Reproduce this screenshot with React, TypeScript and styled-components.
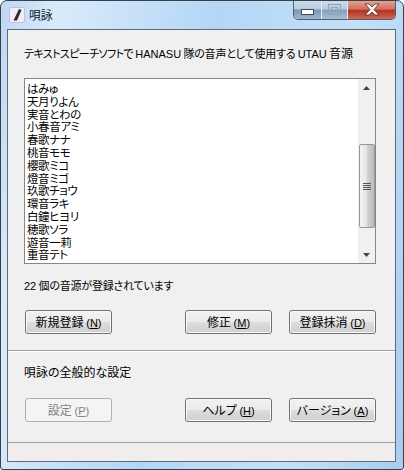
import * as React from "react";
import styled, { createGlobalStyle } from "styled-components";

const names = [
  "はみゅ",
  "天月りよん",
  "実音とわの",
  "小春音アミ",
  "春歌ナナ",
  "桃音モモ",
  "櫻歌ミコ",
  "燈音ミゴ",
  "玖歌チョウ",
  "環音ラキ",
  "白鐘ヒヨリ",
  "穂歌ソラ",
  "遊音一莉",
  "重音テト",
];

const App = () => {
  return (
    <>
      <GlobalStyle />
      <Frame>
        <TitleBar>
          <AppIcon>
            <svg width="16" height="16" viewBox="0 0 16 16">
              <rect x="0.5" y="0.5" width="15" height="15" rx="1.5" fill="#f1ebfa" stroke="#c9b9e4" />
              <path d="M10 2 L12.5 3 L8 13.5 L4.5 13.5 Z" fill="#2b2b2b" />
            </svg>
          </AppIcon>
          <TitleText>唄詠</TitleText>
          <Caption>
            <MinButton>
              <svg width="13" height="6" viewBox="0 0 13 6">
                <rect x="0.5" y="0.5" width="12" height="5" fill="#fff" stroke="#3c4f66" />
              </svg>
            </MinButton>
            <MaxButton>
              <svg width="13" height="11" viewBox="0 0 13 11">
                <rect x="0.5" y="0.5" width="12" height="10" fill="none" stroke="#8fa3b8" />
                <rect x="3.5" y="3.5" width="6" height="4" fill="none" stroke="#8fa3b8" />
              </svg>
            </MaxButton>
            <CloseButton>
              <svg width="16" height="13" viewBox="0 0 16 13">
                <path
                  d="M1 1 H5 L8 4 L11 1 H15 L10 6.5 L15 12 H11 L8 9 L5 12 H1 L6 6.5 Z"
                  fill="#f4f4f4"
                  stroke="#4a2a2a"
                  strokeWidth="0.8"
                />
              </svg>
            </CloseButton>
          </Caption>
        </TitleBar>
        <Client>
          <MainPanel>
            <Label>
              <TightRun>テキストスピーチソフトで</TightRun> <Latin>HANASU</Latin> 隊の音声として使用する{" "}
              <Latin>UTAU</Latin> <WideRun>音源</WideRun>
            </Label>
            <ListBox>
              <Items>
                {names.map((name) => (
                  <Item key={name}>{name}</Item>
                ))}
              </Items>
              <ScrollBar>
                <Arrow>
                  <svg width="7" height="4" viewBox="0 0 7 4">
                    <path d="M3.5 0 L7 4 H0 Z" fill="#444" />
                  </svg>
                </Arrow>
                <Track>
                  <Thumb>
                    <Grip />
                    <Grip />
                    <Grip />
                    <Grip />
                  </Thumb>
                </Track>
                <Arrow>
                  <svg width="7" height="4" viewBox="0 0 7 4">
                    <path d="M0 0 H7 L3.5 4 Z" fill="#444" />
                  </svg>
                </Arrow>
              </ScrollBar>
            </ListBox>
            <Count>
              <Latin>22</Latin> 個の音源が登録されています
            </Count>
            <ButtonRow>
              <Button>
                新規登録 <Latin>(<u>N</u>)</Latin>
              </Button>
              <RightButtons>
                <Button>
                  修正 <Latin>(<u>M</u>)</Latin>
                </Button>
                <Button>
                  登録抹消 <Latin>(<u>D</u>)</Latin>
                </Button>
              </RightButtons>
            </ButtonRow>
          </MainPanel>
          <GlobalPanel>
            <Label>
              <WideRun>唄詠の全般的な設定</WideRun>
            </Label>
            <GlobalRow>
              <Button disabled>
                設定 <Latin>(<u>P</u>)</Latin>
              </Button>
              <RightButtons>
                <Button>
                  ヘルプ <Latin>(<u>H</u>)</Latin>
                </Button>
                <Button>
                  バージョン <Latin>(<u>A</u>)</Latin>
                </Button>
              </RightButtons>
            </GlobalRow>
          </GlobalPanel>
          <StatusBar />
        </Client>
      </Frame>
    </>
  );
};

export default App;

const GlobalStyle = createGlobalStyle`
  html, body {
    margin: 0;
    padding: 0;
    background: #fff;
  }
  * {
    box-sizing: border-box;
  }
`;

const Frame = styled.div`
  width: 404px;
  height: 470px;
  display: flex;
  flex-direction: column;
  overflow: hidden;
  border: 1px solid #3a4048;
  border-radius: 7px 7px 3px 3px;
  background: linear-gradient(100deg, #bcd8f2 0%, #d8ebfb 12%, #b4d6f6 45%, #c4e0f8 75%, #a9cdee 100%);
  font-family: "Noto Sans CJK JP", "Liberation Sans", sans-serif;
  font-feature-settings: "palt";
  font-size: 11px;
  letter-spacing: -0.2px;
  color: #000;
`;

const Latin = styled.span`
  font-family: "Liberation Sans", sans-serif;
  font-size: 11px;
  letter-spacing: 0;
`;

const TightRun = styled.span`
  letter-spacing: -0.6px;
`;

const WideRun = styled.span`
  font-size: 12px;
  letter-spacing: 0;
`;

const TitleBar = styled.div`
  height: 28px;
  flex: none;
  display: flex;
  align-items: flex-start;
  padding: 6px 7px 0 7px;
  position: relative;
`;

const AppIcon = styled.div`
  width: 16px;
  height: 16px;
  margin-left: 1px;
  display: flex;
`;

const TitleText = styled.div`
  margin-left: 4px;
  font-size: 12px;
  line-height: 16px;
  color: #101828;
`;

const Caption = styled.div`
  position: absolute;
  top: -1px;
  right: 7px;
  display: flex;
  height: 20px;
  border: 1px solid #4f5f70;
  border-top: none;
  border-radius: 0 0 5px 5px;
  overflow: hidden;
`;

const CaptionButton = styled.div`
  height: 100%;
  display: flex;
  align-items: center;
  justify-content: center;
`;

const MinButton = styled(CaptionButton)`
  width: 28px;
  padding-top: 5px;
  background: linear-gradient(#cddff0 0%, #b5cbe0 48%, #7f97ae 52%, #9cb6cf 100%);
  border-right: 1px solid #e3edf6;
`;

const MaxButton = styled(CaptionButton)`
  width: 26px;
  background: linear-gradient(#cddff0 0%, #b5cbe0 48%, #88a0b6 52%, #a6c0d8 100%);
  border-right: 1px solid #e3edf6;
`;

const CloseButton = styled(CaptionButton)`
  width: 47px;
  background: linear-gradient(#e5a99b 0%, #d2705f 48%, #b5301f 55%, #cf6a55 100%);
`;

const Client = styled.div`
  flex: 1;
  display: flex;
  flex-direction: column;
  margin: 0 7px 7px 6px;
  border: 1px solid #5f6b78;
  background: #f0f0f0;
`;

const MainPanel = styled.div`
  height: 321px;
  flex: none;
  padding: 14px 19px 0 16px;
  border-bottom: 1px solid #a0a0a0;
  box-shadow: 0 1px 0 #fff;
`;

const Label = styled.div`
  line-height: 18px;
  white-space: nowrap;
`;

const ListBox = styled.div`
  height: 186px;
  margin-top: 15px;
  display: flex;
  border: 1px solid #828790;
  background: #fff;
`;

const Items = styled.div`
  flex: 1;
  padding: 3px 0 0 2px;
  overflow: hidden;
`;

const Item = styled.div`
  height: 12.8px;
  font-size: 11.5px;
  letter-spacing: -0.4px;
  line-height: 13px;
  white-space: nowrap;
`;

const ScrollBar = styled.div`
  width: 17px;
  flex: none;
  display: flex;
  flex-direction: column;
  background: #f0f0f0;
`;

const Arrow = styled.div`
  height: 17px;
  flex: none;
  display: flex;
  align-items: center;
  justify-content: center;
`;

const Track = styled.div`
  flex: 1;
  padding-top: 48px;
`;

const Thumb = styled.div`
  height: 84px;
  display: flex;
  flex-direction: column;
  align-items: center;
  justify-content: center;
  gap: 1px;
  margin-left: 1px;
  border: 1px solid #979797;
  border-radius: 2px;
  background: linear-gradient(90deg, #f4f4f4 0%, #e6e6e6 45%, #cfcfcf 55%, #bdbdbd 100%);
`;

const Grip = styled.div`
  width: 8px;
  height: 1px;
  background: #555;
`;

const Count = styled.div`
  margin-top: 12px;
  line-height: 18px;
`;

const ButtonRow = styled.div`
  margin-top: 15px;
  padding-left: 1px;
  display: flex;
  justify-content: space-between;
`;

const RightButtons = styled.div`
  display: flex;
  gap: 17px;
`;

const Button = styled.button`
  width: 87px;
  height: 24px;
  padding: 0;
  border: 1px solid #707070;
  border-radius: 3px;
  background: linear-gradient(#f2f2f2 0%, #ebebeb 48%, #dddddd 52%, #cfcfcf 100%);
  box-shadow: inset 0 0 0 1px #fbfbfb;
  font-family: inherit;
  font-feature-settings: inherit;
  font-size: 12px;
  letter-spacing: 0;
  line-height: 20px;
  color: #000;

  u {
    text-underline-offset: 1px;
  }

  &:disabled {
    border-color: #adb2b5;
    background: #f4f4f4;
    box-shadow: none;
    color: #838383;
  }
`;

const GlobalPanel = styled.div`
  flex: 1;
  padding: 12px 19px 0 16px;
`;

const GlobalRow = styled(ButtonRow)`
  margin-top: 17px;
`;

const StatusBar = styled.div`
  height: 19px;
  flex: none;
  border-top: 1px solid #a0a0a0;
  background: #f1edec;
`;
